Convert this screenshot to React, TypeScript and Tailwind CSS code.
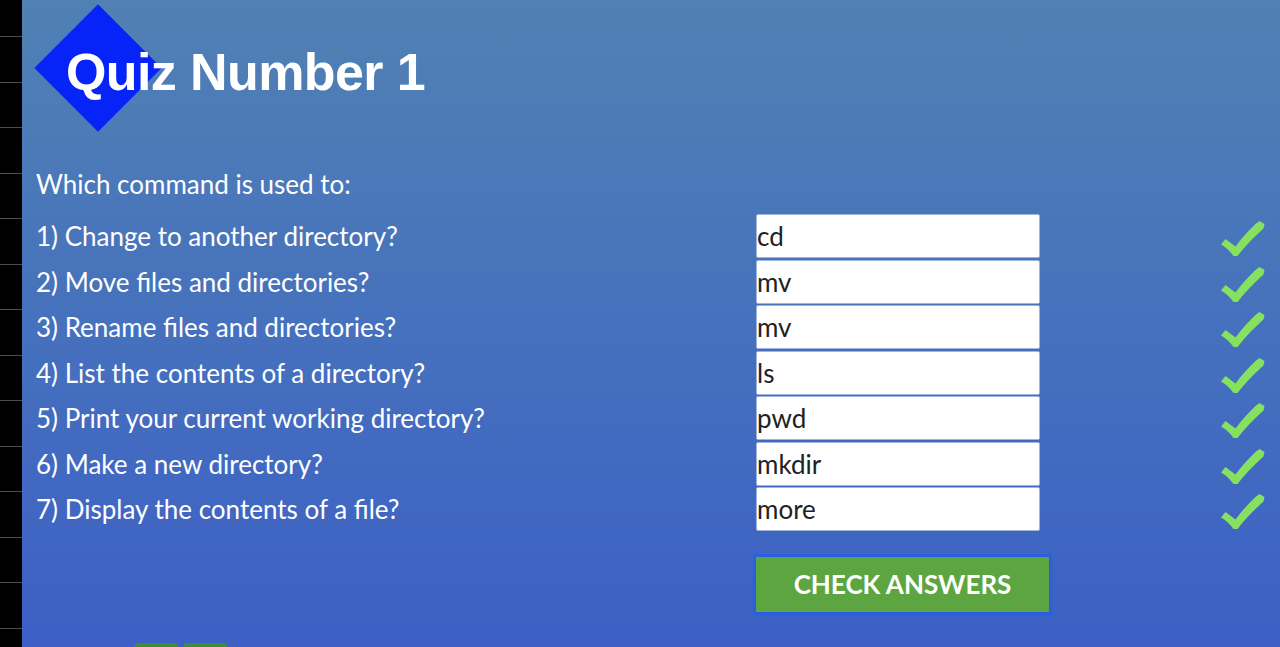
import React from 'react';

const QUESTIONS = [
  { q: '1) Change to another directory?', a: 'cd' },
  { q: '2) Move files and directories?', a: 'mv' },
  { q: '3) Rename files and directories?', a: 'mv' },
  { q: '4) List the contents of a directory?', a: 'ls' },
  { q: '5) Print your current working directory?', a: 'pwd' },
  { q: '6) Make a new directory?', a: 'mkdir' },
  { q: '7) Display the contents of a file?', a: 'more' },
];

const Tick: React.FC = () => (
  <svg width="44" height="38" viewBox="0 0 44 38" className="block mt-[4px]">
    <path
      d="M0 25.5 L4.5 20 L14.5 27.5 C20 20 27 12 35 4.5 L38.5 2 L43.5 5 L42.5 9.5 C33 18 24 27 16.5 37 L12.5 37 C9 32 5 28.5 0 25.5 Z"
      fill="#86e160"
    />
  </svg>
);

const SideStrip: React.FC = () => (
  <div className="w-[22px] shrink-0 bg-black flex flex-col">
    <div className="h-[37px] shrink-0 border-b border-[#4d4d4d]" />
    {Array.from({ length: 14 }).map((_, i) => (
      <div key={i} className="h-[45.5px] shrink-0 border-b border-[#4d4d4d]" />
    ))}
  </div>
);

export default function App() {
  return (
    <div className="flex h-[647px] overflow-hidden bg-black">
      <SideStrip />
      <main className="flex-1 bg-gradient-to-b from-[#5181b3] to-[#3d5fc6] pl-[14px] font-['Lato','Open_Sans',sans-serif] text-white">
        <header className="relative h-[162px]">
          <div className="absolute left-[17px] top-[23px] h-[90px] w-[90px] rotate-45 bg-[#0623f8]" />
          <h1 className="relative pl-[30px] pt-[46px] font-['Liberation_Sans',Arial,sans-serif] text-[52px] font-bold leading-none tracking-[-0.6px]">
            Quiz Number 1
          </h1>
        </header>

        <p className="h-[44px] text-[26px] leading-[44px]">Which command is used to:</p>

        <div className="mt-[8px] flex flex-col gap-[1.5px]">
          {QUESTIONS.map((item, i) => (
            <div key={i} className="grid h-[44px] grid-cols-[720px_284px_1fr] items-center">
              <span className="text-[26px] leading-[44px]">{item.q}</span>
              <input
                readOnly
                value={item.a}
                className="h-[44px] w-[284px] rounded-[2px] border border-[#9fb4df] bg-white px-0 text-[26px] text-[#222] outline-none"
              />
              <div className="flex justify-end pr-[15px]">
                <Tick />
              </div>
            </div>
          ))}
        </div>

        <div className="mt-[23px] pl-[717px]">
          <button className="h-[61px] w-[299px] border-[3px] border-[#2a5fe2] bg-[#5da540] text-[26px] font-bold text-white">
            CHECK ANSWERS
          </button>
        </div>

        <div className="mt-[28px] flex gap-[6px] pl-[99px]">
          <div className="h-[30px] w-[43px] rounded-t-[3px] bg-[#3e8d38]" />
          <div className="h-[30px] w-[43px] rounded-t-[3px] bg-[#3e8d38]" />
        </div>
      </main>
    </div>
  );
}
